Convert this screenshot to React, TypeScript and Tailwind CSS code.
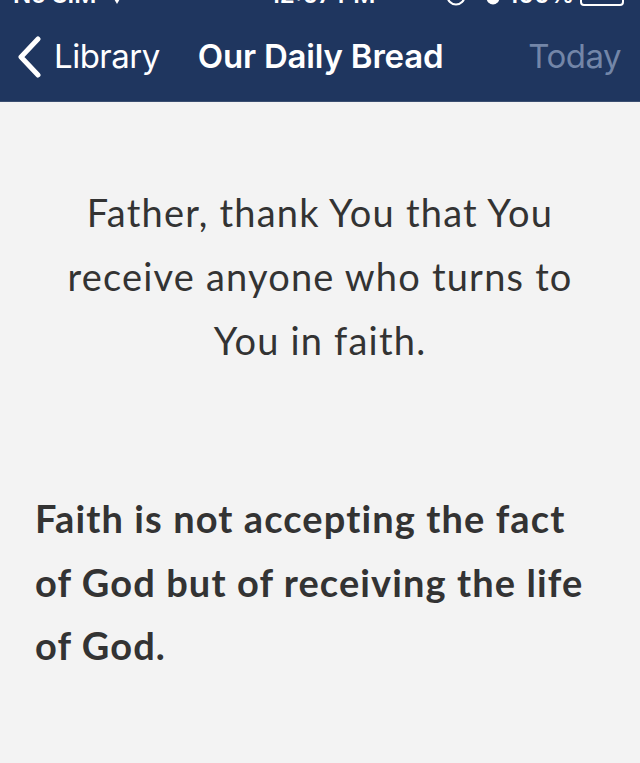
import React from "react";

export default function App() {
  return (
    <div className="w-[640px] h-[763px] bg-[#f3f3f3] overflow-hidden flex flex-col">
      <div className="bg-[#1f365f] h-[102px] flex flex-col border-b border-[#3a4e70]">
        <div className="h-[6px] overflow-hidden text-white font-['Inter',sans-serif] font-semibold text-[24px] leading-[24px]">
          <div className="flex items-end mt-[-17px] pl-[13px] pr-[16px] h-[24px]">
            <div className="w-[230px] flex items-end">
              <span>No SIM</span>
              <svg width="14" height="24" viewBox="0 0 14 24" className="ml-[14px]">
                <path d="M0 9 L7 21 L14 9 Z" fill="white" />
              </svg>
            </div>
            <div className="flex-1 text-center pr-[22px]">12:07 PM</div>
            <div className="w-[200px] flex justify-end items-end">
              <svg width="20" height="22" viewBox="0 0 20 22" className="mr-[20px]">
                <circle cx="10" cy="11" r="8.5" stroke="white" strokeWidth="2.2" fill="none" />
              </svg>
              <svg width="14" height="22" viewBox="0 0 14 22" className="mr-[8px]">
                <circle cx="7" cy="13" r="6.5" fill="white" />
              </svg>
              <span>100%</span>
              <span className="inline-block w-[44px] h-[20px] border-2 border-white rounded-[4px] ml-[6px] mb-[1px]"></span>
            </div>
          </div>
        </div>
        <div className="flex-1 flex items-center px-[16px] font-['Inter',sans-serif] text-[33px] leading-none pt-[6px]">
          <svg width="26" height="42" viewBox="0 0 26 42" className="mr-[12px]">
            <path d="M22 3 L5 21 L22 39" stroke="white" strokeWidth="5" fill="none" strokeLinecap="round" strokeLinejoin="round" />
          </svg>
          <span className="text-white tracking-[-0.5px]">Library</span>
          <span className="text-white font-semibold ml-[38px] tracking-[-0.2px]">Our Daily Bread</span>
          <span className="ml-auto text-[#7386a8] mr-[3px] tracking-[-0.5px]">Today</span>
        </div>
      </div>
      <div className="pl-[35px] pr-[45px] font-['Lato',sans-serif] text-[#333333]">
        <p className="mt-[78px] text-center text-[38px] leading-[64px] tracking-[1.2px] pl-[20px] pr-[10px]">
          Father, thank You that You receive anyone who turns to You in faith.
        </p>
        <p className="mt-[115px] text-[38px] leading-[63.5px] font-bold tracking-[1.1px]">
          Faith is not accepting the fact of God but of receiving the life of God.
        </p>
      </div>
    </div>
  );
}
